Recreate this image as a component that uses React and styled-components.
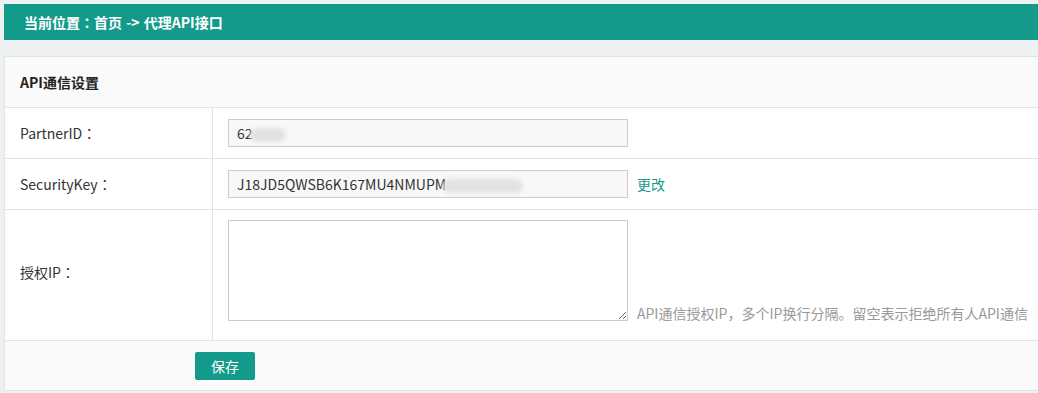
import React from "react";
import styled, { createGlobalStyle } from "styled-components";

const GlobalStyle = createGlobalStyle`
  html, body {
    margin: 0;
    padding: 0;
    background: #eef1f2;
    font-family: "Noto Sans CJK SC", "Noto Sans", sans-serif;
    font-size: 14px;
    color: #333;
  }
`

const Page = styled.div`
  padding: 4px 0 0 4px;
  overflow: hidden;
`

const Crumb = styled.div`
  height: 36px;
  line-height: 36px;
  background: #149a8a;
  color: #fff;
  font-family: "Noto Sans CJK TC", "Noto Sans CJK SC", sans-serif;
  font-weight: 700;
  padding-left: 20px;
  word-spacing: 1px;
`

const Panel = styled.div`
  margin-top: 16px;
  width: 1100px;
  border: 1px solid #e3e3e3;
  border-right: none;
  background: #fff;
`

const PanelHead = styled.div`
  height: 50px;
  line-height: 50px;
  padding-left: 15px;
  background: #fafafa;
  border-bottom: 1px solid #e3e3e3;
  font-weight: 700;
  color: #222;
`

const Row = styled.div`
  display: flex;
  border-bottom: 1px solid #e3e3e3;
`

const Label = styled.div`
  width: 192px;
  padding-left: 15px;
  display: flex;
  align-items: center;
  border-right: 1px solid #e3e3e3;
  font-family: "Noto Sans CJK TC", "Noto Sans CJK SC", sans-serif;
  padding-bottom: ${({tall}) => tall ? "6px" : "0"};
`

const Value = styled.div`
  flex: 1;
  display: flex;
  align-items: ${({tall}) => tall ? "flex-end" : "center"};
  padding: ${({tall}) => tall ? "10px 15px 19px" : "11px 15px"};
`

const Field = styled.div`
  box-sizing: border-box;
  width: 400px;
  height: 28px;
  line-height: 26px;
  padding: 0 8px;
  border: 1px solid #ccc;
  background: #f8f8f8;
  color: #333;
  white-space: nowrap;
  overflow: hidden;
`

const Smudge = styled.span`
  display: inline-block;
  width: ${({w}) => w}px;
  height: 14px;
  vertical-align: middle;
  background: #e2e2e2;
  border-radius: 7px;
  filter: blur(2px);
  margin-left: -3px;
`

const Link = styled.a`
  margin-left: 9px;
  color: #149a8a;
  text-decoration: none;
  cursor: pointer;
`

const Area = styled.textarea`
  box-sizing: border-box;
  width: 400px;
  height: 101px;
  border: 1px solid #ccc;
  background: #fff;
  margin: 0;
  display: block;
`

const Hint = styled.span`
  margin-left: 9px;
  color: #999;
  line-height: 16px;
  white-space: nowrap;
`

const Footer = styled.div`
  height: 49px;
  padding-left: 190px;
  display: flex;
  align-items: center;
  background: #fafafa;
`

const SaveButton = styled.button`
  width: 60px;
  height: 28px;
  border: none;
  border-radius: 2px;
  background: #149a8a;
  color: #fff;
  font-family: inherit;
  font-size: 14px;
  cursor: pointer;
`

const App = () => {
  return (
    <Page>
      <GlobalStyle />
      <Crumb>当前位置：首页 -&gt; 代理API接口</Crumb>

      <Panel>
        <PanelHead>API通信设置</PanelHead>

        <Row>
          <Label>PartnerID：</Label>
          <Value>
            <Field>62<Smudge w={36} /></Field>
          </Value>
        </Row>

        <Row>
          <Label>SecurityKey：</Label>
          <Value>
            <Field>J18JD5QWSB6K167MU4NMUPM<Smudge w={80} /></Field>
            <Link>更改</Link>
          </Value>
        </Row>

        <Row>
          <Label tall>授权IP：</Label>
          <Value tall>
            <Area />
            <Hint>API通信授权IP，多个IP换行分隔。留空表示拒绝所有人API通信</Hint>
          </Value>
        </Row>

        <Footer>
          <SaveButton>保存</SaveButton>
        </Footer>
      </Panel>
    </Page>
  );
}

export default App;
